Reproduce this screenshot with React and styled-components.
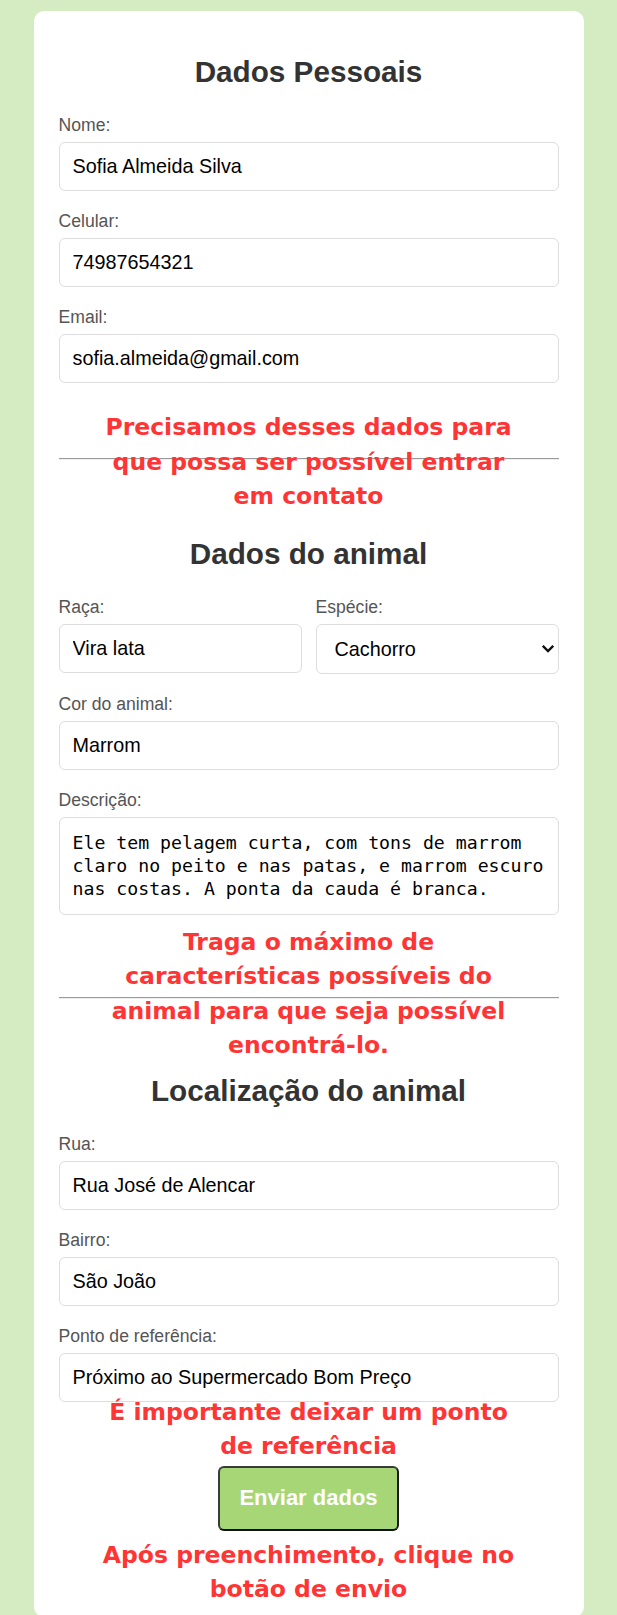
import React from "react";
import styled, { createGlobalStyle, css } from "styled-components";

const GlobalStyle = createGlobalStyle`
  html { overflow: hidden; }
  body {
    margin: 0;
    background: #d5ecc3;
    font-family: "Liberation Sans", Arial, sans-serif;
  }
  *, *::before, *::after { box-sizing: border-box; }
`;

const Card = styled.form`
  display: flex;
  flex-direction: column;
  width: 550px;
  margin: 11px auto 0;
  background: #ffffff;
  border-radius: 10px;
  padding: 44px 25px 10px;
`;

const Title = styled.h2`
  margin: 0 0 26px;
  font-size: 29.7px;
  line-height: 34px;
  font-weight: 700;
  color: #333333;
  text-align: center;
`;

const Field = styled.div`
  display: flex;
  flex-direction: column;
  margin-bottom: ${(p) => (p.$mb != null ? p.$mb : 20)}px;
`;

const Label = styled.label`
  font-size: 17.6px;
  line-height: 20px;
  color: #555555;
  margin-bottom: 7px;
`;

const fieldBase = css`
  width: 100%;
  border: 1px solid #dddddd;
  border-radius: 6px;
  background: #ffffff;
  color: #000000;
  outline: none;
  font-family: "Liberation Sans", Arial, sans-serif;
  font-size: 19.8px;
`;

const Input = styled.input`
  ${fieldBase};
  height: 49px;
  padding: 0 13px;
`;

const Row = styled.div`
  display: grid;
  grid-template-columns: 1fr 1fr;
  column-gap: 14px;
  margin-bottom: 20px;
`;

const SelectWrap = styled.div`
  position: relative;
`;

const Select = styled.select`
  ${fieldBase};
  appearance: none;
  -webkit-appearance: none;
  height: 50px;
  padding: 0 30px 0 18px;
`;

const Chevron = styled.svg`
  position: absolute;
  right: 5px;
  top: 21px;
  width: 12px;
  height: 8px;
  pointer-events: none;
`;

const TextArea = styled.textarea`
  ${fieldBase};
  display: block;
  height: 98px;
  padding: 13px 8px 13px 13px;
  font-family: "DejaVu Sans Mono", "Liberation Mono", monospace;
  font-size: 18.2px;
  line-height: 23px;
  resize: none;
  overflow: hidden;
`;

const Note = styled.p`
  position: relative;
  z-index: 0;
  margin: ${(p) => p.$mt}px 0 ${(p) => p.$mb}px;
  font-family: "DejaVu Sans", "Noto Sans", sans-serif;
  font-weight: 700;
  font-size: 23.5px;
  line-height: 34.5px;
  color: #ff3535;
  text-align: center;
  ${(p) =>
    p.$line != null &&
    css`
      &::before {
        content: "";
        position: absolute;
        left: 0;
        right: 0;
        top: ${p.$line}px;
        height: 2px;
        border-top: 1px solid #9a9a9a;
        border-bottom: 1px solid #eeeeee;
        z-index: -1;
      }
    `}
`;

const SubmitButton = styled.button`
  display: block;
  margin: 2px auto 0;
  width: 181px;
  height: 65px;
  background: #a7d676;
  border: 2px solid #3a3a3a;
  border-bottom-color: #111111;
  border-right-color: #1a1a1a;
  border-radius: 6px;
  color: #ffffff;
  font-family: "Liberation Sans", Arial, sans-serif;
  font-weight: 700;
  font-size: 22px;
  cursor: pointer;
`;

function TextField({ id, label, value, mb }) {
  return (
    <Field $mb={mb}>
      <Label htmlFor={id}>{label}</Label>
      <Input id={id} type="text" defaultValue={value} />
    </Field>
  );
}

export default function App() {
  return (
    <>
      <GlobalStyle />
      <Card onSubmit={(e) => e.preventDefault()}>
        <Title>Dados Pessoais</Title>
        <TextField id="nome" label="Nome:" value="Sofia Almeida Silva" />
        <TextField id="celular" label="Celular:" value="74987654321" />
        <TextField id="email" label="Email:" value="sofia.almeida@gmail.com" />

        <Note $mt={7} $mb={23} $line={48}>
          Precisamos desses dados para
          <br />
          que possa ser possível entrar
          <br />
          em contato
        </Note>

        <Title>Dados do animal</Title>
        <Row>
          <Field $mb={0}>
            <Label htmlFor="raca">Raça:</Label>
            <Input id="raca" type="text" defaultValue="Vira lata" />
          </Field>
          <Field $mb={0}>
            <Label htmlFor="especie">Espécie:</Label>
            <SelectWrap>
              <Select id="especie" defaultValue="Cachorro">
                <option>Cachorro</option>
                <option>Gato</option>
                <option>Outro</option>
              </Select>
              <Chevron viewBox="0 0 12 8" aria-hidden="true">
                <path
                  d="M1.6 1.6 L6 6 L10.4 1.6"
                  fill="none"
                  stroke="#111"
                  strokeWidth="2.3"
                  strokeLinecap="square"
                />
              </Chevron>
            </SelectWrap>
          </Field>
        </Row>
        <TextField id="cor" label="Cor do animal:" value="Marrom" />
        <Field $mb={0}>
          <Label htmlFor="descricao">Descrição:</Label>
          <TextArea
            id="descricao"
            defaultValue="Ele tem pelagem curta, com tons de marrom claro no peito e nas patas, e marrom escuro nas costas. A ponta da cauda é branca."
          />
        </Field>

        <Note $mt={10} $mb={11} $line={72}>
          Traga o máximo de
          <br />
          características possíveis do
          <br />
          animal para que seja possível
          <br />
          encontrá-lo.
        </Note>

        <Title>Localização do animal</Title>
        <TextField id="rua" label="Rua:" value="Rua José de Alencar" />
        <TextField id="bairro" label="Bairro:" value="São João" />
        <TextField
          id="referencia"
          label="Ponto de referência:"
          value="Próximo ao Supermercado Bom Preço"
          mb={0}
        />

        <Note $mt={-7} $mb={0}>
          É importante deixar um ponto
          <br />
          de referência
        </Note>

        <SubmitButton type="submit">Enviar dados</SubmitButton>

        <Note $mt={7} $mb={0}>
          Após preenchimento, clique no
          <br />
          botão de envio
        </Note>
      </Card>
    </>
  );
}
